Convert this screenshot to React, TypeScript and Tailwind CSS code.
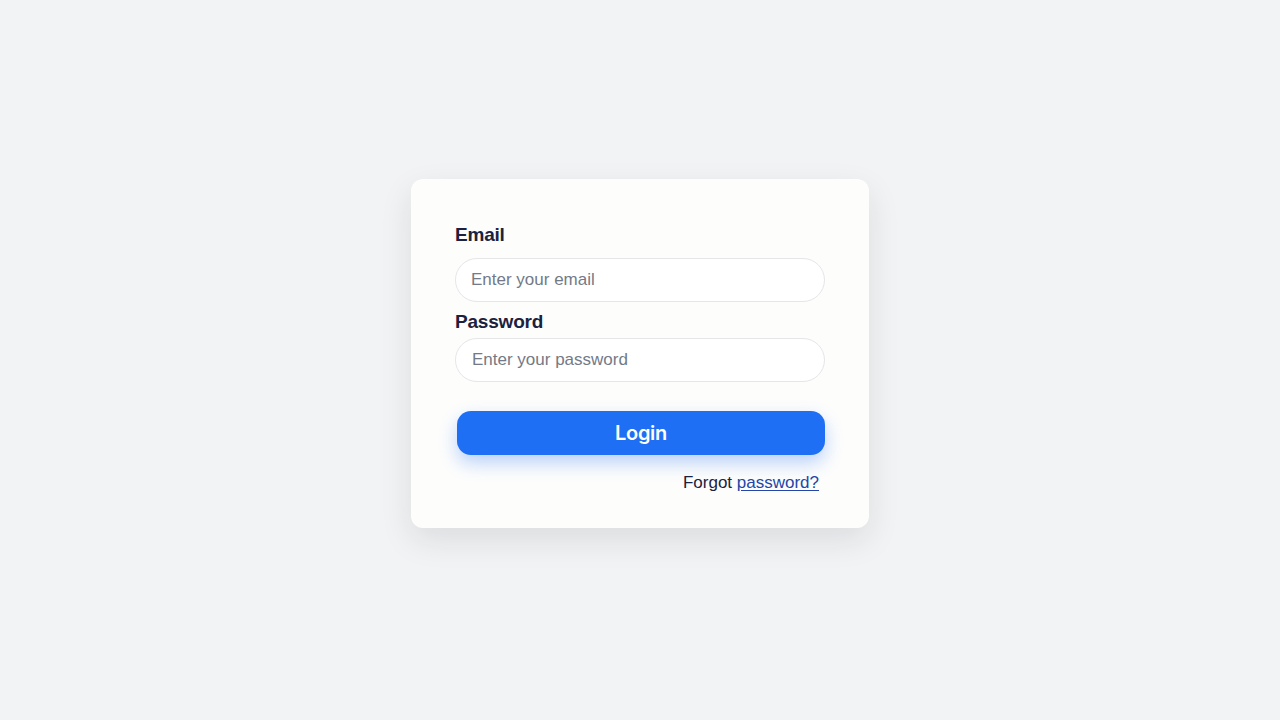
export default function App() {
  return (
    <div className="min-h-screen w-full bg-[#f2f3f4] flex items-center justify-center pb-[13px] font-['Liberation_Sans',Arial,sans-serif]">
      <div className="w-[458px] rounded-[12px] bg-[#fdfdfc] shadow-[0_12px_32px_rgba(20,30,50,0.10)] pt-[44px] px-[44px] pb-[33px]">
        <label className="block text-[19px] leading-[24px] font-bold text-[#1b2240] tracking-[-0.2px]">
          Email
        </label>
        <input
          type="email"
          placeholder="Enter your email"
          className="mt-[11px] block w-full h-[44px] rounded-full border border-[#e5e6e9] bg-white pl-[15px] text-[17px] text-[#374151] placeholder:text-[#737a87] outline-none"
        />
        <label className="mt-[8px] block text-[19px] leading-[24px] font-bold text-[#1b2240] tracking-[-0.2px]">
          Password
        </label>
        <input
          type="password"
          placeholder="Enter your password"
          className="mt-[4px] block w-full h-[44px] rounded-full border border-[#e5e6e9] bg-white pl-[16px] text-[17px] text-[#374151] placeholder:text-[#737a87] outline-none"
        />
        <button className="mt-[29px] mx-[2px] block w-[368px] h-[44px] rounded-[14px] bg-[#1f6ff4] text-white text-[20px] font-semibold font-['Inter',sans-serif] tracking-[-0.3px] shadow-[0_8px_18px_rgba(31,111,244,0.30)]">
          Login
        </button>
        <div className="mt-[16px] pr-[6px] text-right text-[17px] leading-[24px]">
          <span className="text-[#1b2240]">Forgot </span>
          <a href="#" className="text-[#2446a8] underline underline-offset-2">
            password?
          </a>
        </div>
      </div>
    </div>
  );
}
